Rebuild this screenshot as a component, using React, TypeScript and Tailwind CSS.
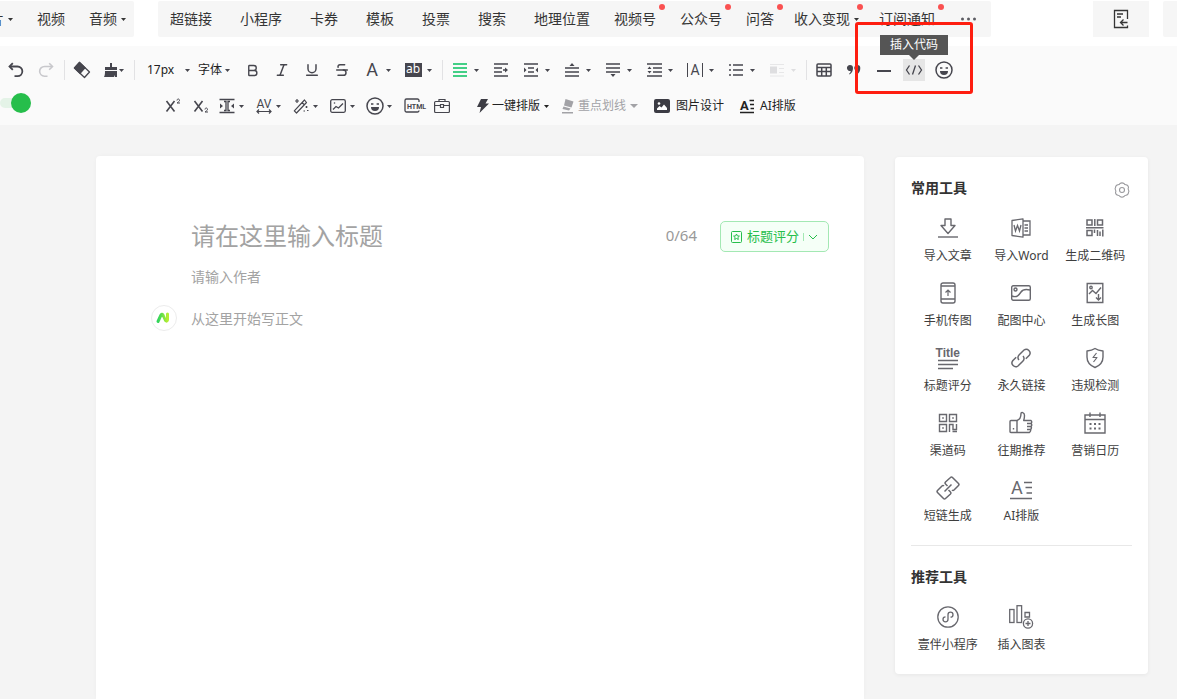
import clsx from "clsx";
import { Bold, Italic, Strikethrough, Underline } from "lucide-react";
import type { ReactNode } from "react";

interface DrawingProps {
  w?: number;
  h?: number;
  sw?: number;
  className?: string;
  children: ReactNode;
}

function Drawing({ w = 16, h = 16, sw = 1.4, className, children }: DrawingProps) {
  return (
    <svg
      width={w}
      height={h}
      viewBox={`0 0 ${w} ${h}`}
      fill="none"
      stroke="currentColor"
      strokeWidth={sw}
      className={clsx("shrink-0 overflow-visible", className)}
      aria-hidden="true"
    >
      {children}
    </svg>
  );
}

function Caret({ className }: { className?: string }) {
  return (
    <svg
      width="5"
      height="3"
      viewBox="0 0 5 3"
      fill="currentColor"
      className={clsx("shrink-0", className)}
      aria-hidden="true"
    >
      <path d="M0 0h5L2.5 3z" />
    </svg>
  );
}

interface ToolProps {
  label: string;
  children: ReactNode;
  disabled?: boolean;
}

function Tool({ label, children, disabled }: ToolProps) {
  return (
    <button
      aria-label={label}
      disabled={disabled}
      className="flex h-9 w-[30px] shrink-0 items-center justify-center disabled:text-[#c8c8cc]"
    >
      {children}
    </button>
  );
}

function DropTool({ label, children, disabled }: ToolProps) {
  return (
    <button
      aria-label={label}
      disabled={disabled}
      className="flex h-9 w-[41px] shrink-0 items-center pl-px disabled:text-[#dedee0]"
    >
      <span className="flex w-7 justify-center">{children}</span>
      <Caret />
    </button>
  );
}

function SmallTool({ label, children }: ToolProps) {
  return (
    <button
      aria-label={label}
      className="flex h-9 w-7 shrink-0 items-center justify-center"
    >
      {children}
    </button>
  );
}

function SmallDropTool({ label, children }: ToolProps) {
  return (
    <button aria-label={label} className="flex h-9 w-[37px] shrink-0 items-center">
      <span className="flex w-6 justify-center">{children}</span>
      <Caret />
    </button>
  );
}

function Divider() {
  return (
    <span className="flex w-1.5 shrink-0 justify-center">
      <span className="h-5 w-px bg-[#e2e2e4]" />
    </span>
  );
}

function SmileIcon() {
  return (
    <Drawing w={18} h={18} sw={1.5}>
      <circle cx="9" cy="9" r="8" />
      <path d="M5 10h8a4 4 0 0 1-8 0z" fill="currentColor" stroke="none" />
      <path d="M5 7h2.4M10.6 7H13" />
    </Drawing>
  );
}

interface MenuItemProps {
  label: string;
  caret?: boolean;
  dot?: boolean;
}

function MenuItem({ label, caret, dot }: MenuItemProps) {
  return (
    <button className="relative flex shrink-0 items-center gap-1 text-sm leading-5 whitespace-nowrap">
      {label}
      {caret && <Caret />}
      {dot && (
        <span
          className={clsx(
            "absolute -top-[5px] size-1.5 rounded-full bg-[#fa5151]",
            caret ? "-right-1" : "-right-[9px]"
          )}
        />
      )}
    </button>
  );
}

function TopBar() {
  return (
    <header className="flex h-[46px] shrink-0 items-start gap-6 overflow-hidden bg-white pt-px">
      <nav className="flex h-9 w-[134px] shrink-0 items-center justify-end gap-6 overflow-hidden rounded-r-xs bg-[#f6f6f6] pr-2">
        <MenuItem label="图片" caret />
        <MenuItem label="视频" />
        <MenuItem label="音频" caret />
      </nav>
      <nav className="flex h-9 shrink-0 items-center rounded-xs bg-[#f6f6f6] px-3">
        <div className="flex gap-7">
          {LINK_MENU.map((label) => (
            <MenuItem key={label} label={label} />
          ))}
        </div>
        <div className="ml-6 flex gap-6">
          {ACCOUNT_MENU.map((label) => (
            <MenuItem key={label} label={label} dot />
          ))}
        </div>
        <div className="ml-5 flex gap-5">
          <MenuItem label="收入变现" caret dot />
          <MenuItem label="订阅通知" dot />
        </div>
        <button aria-label="更多" className="ml-6 text-[#5c5c62]">
          <Drawing w={20} h={6}>
            <g fill="currentColor" stroke="none">
              <circle cx="3.5" cy="3" r="1.5" />
              <circle cx="9.5" cy="3" r="1.5" />
              <circle cx="15.5" cy="3" r="1.5" />
            </g>
          </Drawing>
        </button>
      </nav>
      <div className="ml-auto flex shrink-0 gap-3.5">
        <button
          aria-label="退出"
          className="flex h-9 w-14 items-center justify-center bg-[#f6f6f6]"
        >
          <Drawing w={16} h={20} sw={1.3}>
            <path d="M14.5 10V1.500h-13v17h13v-2" />
            <path d="M4 5h6M4 8h4" />
            <path d="M14.500 13.500H8.500M10.500 10.500l-3 3 3 3" />
          </Drawing>
        </button>
        <div className="h-9 w-3.5 rounded-l-xs bg-[#f6f6f6]" />
      </div>
    </header>
  );
}

function CodeTool() {
  return (
    <div className="relative flex h-9 w-[30px] shrink-0 items-center justify-center">
      <button
        aria-label="插入代码"
        className="flex size-[22px] items-center justify-center bg-[#e6e6e6]"
      >
        <Drawing w={18} h={12} sw={1.3}>
          <path d="M4.5 1.5 1.500 6l3 4.500M13.500 1.500l3 4.500-3 4.500M10.500 1.500l-3 9" />
        </Drawing>
      </button>
      <div
        role="tooltip"
        className="absolute -top-[17px] left-1/2 z-20 flex h-5 w-[68px] -translate-x-1/2 items-center justify-center bg-[#555] text-xs text-white"
      >
        插入代码
        <span className="absolute top-full left-1/2 -translate-x-1/2 border-x-[5px] border-t-[5px] border-x-transparent border-t-[#555]" />
      </div>
      <div className="pointer-events-none absolute -top-[30px] left-1/2 z-10 h-[72px] w-[118px] -translate-x-1/2 rounded-[3px] border-3 border-[#fe1e10]" />
    </div>
  );
}

function FormatRow() {
  return (
    <div className="flex items-center pl-px">
      <Tool label="撤销">
        <Drawing sw={1.8}>
          <path d="M2 4.500h7.500a4.800 4.800 0 0 1 0 9.700H6.500" />
          <path d="M4.800 1.200 1.500 4.500l3.300 3.300" />
        </Drawing>
      </Tool>
      <Tool label="重做" disabled>
        <Drawing sw={1.6}>
          <path d="M14 4.500H6.500a4.800 4.800 0 0 0 0 9.700h3" />
          <path d="M11.200 1.200l3.300 3.300-3.300 3.300" />
        </Drawing>
      </Tool>
      <Divider />
      <Tool label="清除格式">
        <Drawing w={18} h={18} sw={1.3}>
          <path d="M6.500 1.500l10 9.500-5 5.500-10-9.500z" strokeLinejoin="round" />
          <path d="M6.500 1.500l5.500 5.200-5 5.500-5.500-5.200z" fill="currentColor" />
        </Drawing>
      </Tool>
      <button
        aria-label="格式刷"
        className="flex h-9 w-[34px] shrink-0 items-center justify-center gap-px"
      >
        <Drawing w={14} h={14}>
          <path
            d="M6 0h2v4h5v3H1V4h5zM1 8h12v6h-2v-2l-1 2H0c1-2 1-4 1-6z"
            fill="currentColor"
            stroke="none"
          />
        </Drawing>
        <Caret />
      </button>
      <Divider />
      <label className="flex w-[61px] shrink-0 items-center pl-2.5">
        <select
          aria-label="字号"
          className="w-[38px] appearance-none bg-transparent text-xs text-[#222] outline-none"
        >
          <option>17px</option>
        </select>
        <Caret />
      </label>
      <label className="flex w-[39px] shrink-0 items-center">
        <select
          aria-label="字体"
          className="w-[27px] appearance-none bg-transparent text-xs text-[#222] outline-none"
        >
          <option>字体</option>
        </select>
        <Caret />
      </label>
      <Tool label="加粗">
        <Bold size={15} strokeWidth={2.2} />
      </Tool>
      <Tool label="斜体">
        <Italic size={16} strokeWidth={2.2} />
      </Tool>
      <Tool label="下划线">
        <Underline size={16} strokeWidth={2.2} />
      </Tool>
      <Tool label="删除线">
        <Strikethrough size={16} strokeWidth={2.2} />
      </Tool>
      <DropTool label="字体颜色">
        <span className="font-['Roboto',sans-serif] text-lg leading-5">A</span>
      </DropTool>
      <DropTool label="背景色">
        <span className="h-3.5 w-[17px] bg-[#46464e] text-center text-xs leading-3 text-white">
          ab
        </span>
      </DropTool>
      <Divider />
      <DropTool label="对齐">
        <Drawing w={14} h={14} sw={1.5} className="text-[#07c160]">
          <path d="M0 1h14M0 5h14M0 9h14M0 13h14" />
        </Drawing>
      </DropTool>
      <Tool label="首行缩进">
        <Drawing w={16} h={14} sw={1.5}>
          <path d="M1 1h14M1 5h8M1 9h8M1 13h14M10 7h3" />
          <path d="M12 4.500 15 7l-3 2.500z" fill="currentColor" stroke="none" />
        </Drawing>
      </Tool>
      <DropTool label="两端缩进">
        <Drawing w={16} h={14} sw={1.5}>
          <path d="M1 1h14M5 5h6M5 9h6M1 13h14" />
          <path
            d="M1 4.500 3.500 7 1 9.500zM15 4.500 12.500 7 15 9.500z"
            fill="currentColor"
            stroke="none"
          />
        </Drawing>
      </DropTool>
      <DropTool label="段前距">
        <Drawing w={14} h={14} sw={1.5}>
          <path d="M0 5h14M0 9h14M0 13h14" />
          <path d="M4.500 3 7 0l2.500 3z" fill="currentColor" stroke="none" />
        </Drawing>
      </DropTool>
      <DropTool label="段后距">
        <Drawing w={14} h={14} sw={1.5}>
          <path d="M0 1h14M0 5h14M0 9h14" />
          <path d="M4.500 11 7 14l2.500-3z" fill="currentColor" stroke="none" />
        </Drawing>
      </DropTool>
      <DropTool label="行间距">
        <Drawing w={15} h={14} sw={1.5}>
          <path d="M0 1h15M6 5h9M6 9h9M0 13h15" />
          <path
            d="M.5 6 2.500 3.500 4.500 6zM.5 8l2 2.500L4.500 8z"
            fill="currentColor"
            stroke="none"
          />
        </Drawing>
      </DropTool>
      <DropTool label="字间距">
        <span className="flex h-3.5 items-center border-x border-current px-0.5 font-['Roboto',sans-serif] text-sm leading-3.5">
          A
        </span>
      </DropTool>
      <DropTool label="列表">
        <Drawing w={14} h={14} sw={1.5}>
          <path d="M4 2h10M4 7h10M4 12h10M0 2h2M0 7h2M0 12h2" />
        </Drawing>
      </DropTool>
      <DropTool label="浮动" disabled>
        <Drawing w={14} h={14} sw={1}>
          <path d="M0 1.500h14M9 5.500h5M9 9.500h5M0 13h14" opacity=".7" />
          <path d="M0 3.500h7v7H0z" fill="currentColor" stroke="none" />
        </Drawing>
      </DropTool>
      <Divider />
      <Tool label="表格">
        <Drawing w={16} h={14} sw={1.5}>
          <rect x="1" y="1" width="14" height="12" rx="1" />
          <path d="M1 4.500h14M1 8.500h14M5.700 4.500V13M10.300 4.500V13" />
        </Drawing>
      </Tool>
      <Tool label="引用">
        <Drawing w={14} h={12}>
          <path
            d="M3 1a3 3 0 0 1 3 3c0 3-1 5-3.500 6.500L2 9.800C3.200 9 3.700 8 3.700 6.900A3 3 0 1 1 3 1zM10.300 1a3 3 0 0 1 3 3c0 3-1 5-3.500 6.500l-.5-.7c1.200-.8 1.700-1.800 1.700-2.900A3 3 0 1 1 10.300 1z"
            fill="currentColor"
            stroke="none"
          />
        </Drawing>
      </Tool>
      <Tool label="分隔线">
        <Drawing w={14} h={4} sw={2}>
          <path d="M0 3h14" />
        </Drawing>
      </Tool>
      <CodeTool />
      <Tool label="表情">
        <SmileIcon />
      </Tool>
    </div>
  );
}

function PluginRow() {
  return (
    <div className="flex items-center">
      <input
        type="checkbox"
        defaultChecked
        aria-label="插件开关"
        className="relative mr-32 mb-1.5 h-2.5 w-[31px] shrink-0 appearance-none rounded-full bg-[#e4f3e7] after:absolute after:-top-[5px] after:right-0 after:size-5 after:rounded-full after:bg-[#26be4b] after:content-['']"
      />
      <SmallTool label="上标">
        <Drawing sw={1.6}>
          <path d="M1.500 3l8 10.500M9.500 3l-8 10.500" />
          <path d="M12 2.500c0-2 2.500-2 2.500 0 0 1-1.500 1.500-2.500 2.500h3" strokeWidth="1" />
        </Drawing>
      </SmallTool>
      <SmallTool label="下标">
        <Drawing sw={1.6}>
          <path d="M1.500 3l8 10.500M9.500 3l-8 10.500" />
          <path d="M12 11.500c0-2 2.500-2 2.500 0 0 1-1.500 1.500-2.500 2.500h3" strokeWidth="1" />
        </Drawing>
      </SmallTool>
      <SmallDropTool label="页边距">
        <Drawing sw={1.3}>
          <path d="M.5 1.500h15M.5 14.500h15M5 3.500h2v9H5M11 3.500H9v9h2" />
          <path
            d="M1 5.500 4 8l-3 2.500zM15 5.500 12 8l3 2.500z"
            fill="currentColor"
            stroke="none"
          />
        </Drawing>
      </SmallDropTool>
      <SmallDropTool label="字符间距">
        <span className="flex flex-col items-center">
          <span className="font-['Roboto',sans-serif] text-xs leading-[10px]">AV</span>
          <Drawing w={16} h={5} sw={1.2}>
            <path d="M1 2.500h14M3 .5 1 2.500l2 2M13 .5l2 2-2 2" />
          </Drawing>
        </span>
      </SmallDropTool>
      <SmallDropTool label="魔法棒">
        <Drawing sw={1.2}>
          <path d="M11.500 2 13.500 4.500 3.500 15 1.300 12.800zM9 4.500 11.500 7" strokeLinejoin="round" />
          <path d="M4 1v4M2 3h4M13.500 8v2M12.500 9h2M10.500 13h1.500M14 12.500h1.500" />
        </Drawing>
      </SmallDropTool>
      <SmallDropTool label="图片工具">
        <Drawing h={14} sw={1.3}>
          <rect x=".7" y=".7" width="14.600" height="12.600" rx="1.5" />
          <path d="M3 10.500l3-3 2.500 1.500L13 4.500" />
          <circle cx="4.5" cy="4" r=".8" fill="currentColor" stroke="none" />
        </Drawing>
      </SmallDropTool>
      <SmallDropTool label="表情包">
        <SmileIcon />
      </SmallDropTool>
      <SmallTool label="HTML">
        <Drawing w={22} h={16} sw={1.3}>
          <path d="M16 4V2.500A1.500 1.500 0 0 0 14.500 1h-11A1.500 1.500 0 0 0 2 2.500v10A1.500 1.500 0 0 0 3.500 14h11a1.500 1.500 0 0 0 1.500-1.500" />
          <text
            x="4"
            y="10.5"
            fontSize="7"
            fontWeight="700"
            fill="currentColor"
            stroke="none"
            className="font-['Roboto',sans-serif]"
          >
            HTML
          </text>
        </Drawing>
      </SmallTool>
      <SmallTool label="工具箱">
        <Drawing sw={1.2}>
          <rect x=".6" y="3.5" width="14.800" height="11" rx="1" />
          <path d="M5 3.500V1.500h6v2M.7 7.500H6M10 7.500h5.300M6.500 6.500h3v3h-3z" />
        </Drawing>
      </SmallTool>
      <button className="ml-5 flex h-9 shrink-0 items-center text-xs text-[#222]">
        <Drawing w={14} h={14} className="text-[#3c3c44]">
          <path d="M5 0h7L9.500 4.500H13L3.500 14l1.500-6H1z" fill="currentColor" stroke="none" />
        </Drawing>
        <span className="mr-1 ml-0.5 whitespace-nowrap">一键排版</span>
        <Caret />
      </button>
      <button className="ml-3 flex h-9 shrink-0 items-center text-xs text-[#a2a2a6]">
        <Drawing w={14} h={14}>
          <path
            d="M4.500 0 12.500 2.500 10.500 8.500 3 6.500zM2.500 7.500 9.500 9.500 8 11.500 1.500 10zM1 13h11v1.500H1z"
            fill="currentColor"
            stroke="none"
          />
        </Drawing>
        <span className="mr-1 ml-[3px] whitespace-nowrap">重点划线</span>
        <Drawing w={8} h={4}>
          <path d="M0 0h8L4 4z" fill="currentColor" stroke="none" />
        </Drawing>
      </button>
      <button className="ml-4 flex h-9 shrink-0 items-center gap-1.5 text-xs text-[#222]">
        <Drawing w={16} h={14}>
          <rect width="16" height="14" rx="2" fill="#3c3c44" stroke="none" />
          <circle cx="5" cy="4.5" r="1.3" fill="#fff" stroke="none" />
          <path d="M3 11V9.500L5.500 7l2 1.500L10 5.500 13 9v2z" fill="#fff" stroke="none" />
        </Drawing>
        <span className="whitespace-nowrap">图片设计</span>
      </button>
      <button className="ml-4 flex h-9 shrink-0 items-center gap-1.5 text-xs text-[#222]">
        <Drawing w={14} h={14} sw={1.3}>
          <path d="M0 13.500h14M9.500 1.500H14M10 5.500h4M10.500 9.500H14" />
          <text
            x="0"
            y="10.5"
            fontSize="13"
            fontWeight="700"
            fill="currentColor"
            stroke="none"
            className="font-['Roboto',sans-serif]"
          >
            A
          </text>
        </Drawing>
        <span className="whitespace-nowrap">AI排版</span>
      </button>
    </div>
  );
}

function Editor() {
  return (
    <section className="flex min-w-0 flex-1 flex-col rounded-t-sm bg-white pt-[65px] pr-[35px] shadow-[0_0_4px_rgba(0,0,0,0.03)]">
      <div className="flex h-[31px] items-start pl-[95px]">
        <input
          aria-label="标题"
          placeholder="请在这里输入标题"
          className="h-[30px] min-w-0 flex-1 text-2xl leading-[30px] outline-none placeholder:text-[#a3a3a3]"
        />
        <span className="mt-1 mr-[23px] text-[15px] leading-5 text-[#999]">0/64</span>
        <button className="flex h-[31px] w-[109px] shrink-0 items-center justify-center rounded-[5px] border border-[#a3e8b3] bg-[#f5fff7] text-[13px] text-[#26be4b]">
          <Drawing w={12} h={12} sw={1}>
            <rect x=".5" y=".5" width="10" height="11" rx="1" />
            <path d="M5.500 3l.9 1.900 2 .2-1.500 1.400.4 2-1.800-1-1.800 1 .4-2L2.600 5.100l2-.2z" />
          </Drawing>
          <span className="ml-1">标题评分</span>
          <span className="mx-1 h-2 w-px bg-[#a3e8b3]" />
          <Drawing w={10} h={6} sw={1}>
            <path d="M1 1l4 4 4-4" />
          </Drawing>
        </button>
      </div>
      <input
        aria-label="作者"
        placeholder="请输入作者"
        className="mt-[15px] ml-[95px] h-5 text-sm leading-5 outline-none placeholder:text-[#a3a3a3]"
      />
      <div className="mt-[18px] flex flex-1 gap-3.5 pl-[55px]">
        <button
          aria-label="AI 助手"
          className="flex size-[26px] shrink-0 items-center justify-center rounded-full border border-[#ececec]"
        >
          <Drawing w={14} h={12} className="mr-0.5">
            <defs>
              <linearGradient id="assistant" x1="0" y1="0" x2="1" y2="0">
                <stop offset="0" stopColor="#2fd45c" />
                <stop offset="1" stopColor="#b4ee32" />
              </linearGradient>
            </defs>
            <path
              d="M2 9.500 5 3q1-1.500 2 0l2.500 5.500q1.500 1.500 2-.5V2"
              stroke="url(#assistant)"
              strokeWidth="3"
              strokeLinecap="round"
              strokeLinejoin="round"
            />
          </Drawing>
        </button>
        <textarea
          aria-label="正文"
          placeholder="从这里开始写正文"
          className="mt-1 min-w-0 flex-1 resize-none text-sm leading-5 outline-none placeholder:text-[#a3a3a3]"
        />
      </div>
    </section>
  );
}

interface SideTool {
  label: string;
  icon: ReactNode;
}

function ToolGrid({ tools }: { tools: SideTool[] }) {
  return (
    <div className="mt-[18px] grid grid-cols-3 gap-y-[17px]">
      {tools.map(({ label, icon }) => (
        <button key={label} className="flex flex-col items-center gap-2">
          <span className="flex h-6 items-center text-[#68686e]">{icon}</span>
          <span className="text-xs leading-4 whitespace-nowrap">{label}</span>
        </button>
      ))}
    </div>
  );
}

function Sidebar() {
  return (
    <aside className="mt-px w-[253px] shrink-0 self-start rounded-sm bg-white px-4 py-[21px] text-[#3e3e3e] shadow-[0_1px_4px_rgba(0,0,0,0.06)]">
      <div className="flex h-5 items-center justify-between">
        <h2 className="text-sm leading-5 font-bold text-[#333]">常用工具</h2>
        <button aria-label="设置" className="mt-1 mr-0.5 text-[#9a9a9e]">
          <Drawing sw={1.1}>
            <path
              d="M6 1.500Q8 .2 10 1.500q.6 1.200 2 1.300 2.300.2 2.500 2.700-.8 1.200 0 2.500.8 1.300 0 2.500-.2 2.500-2.500 2.700-1.400.1-2 1.300-2 1.300-4 0-.6-1.200-2-1.300-2.300-.2-2.500-2.700.8-1.200 0-2.500-.8-1.300 0-2.500.2-2.500 2.500-2.700 1.400-.1 2-1.300z"
              strokeLinejoin="round"
            />
            <circle cx="8" cy="8" r="2.5" />
          </Drawing>
        </button>
      </div>
      <ToolGrid tools={COMMON_TOOLS} />
      <h2 className="mt-[21px] border-t border-[#e8e8e8] pt-[21px] text-sm leading-5 font-bold text-[#333]">
        推荐工具
      </h2>
      <ToolGrid tools={RECOMMENDED_TOOLS} />
    </aside>
  );
}

export default function App() {
  return (
    <div className="flex min-h-screen flex-col overflow-x-hidden bg-[#f4f4f4] font-['Noto_Sans','Noto_Sans_CJK_SC',sans-serif] text-[#353535]">
      <TopBar />
      <div className="bg-[#fafafa] pt-1.5 pb-px text-[#46464e]">
        <FormatRow />
        <PluginRow />
      </div>
      <main className="flex flex-1 gap-[31px] pt-[31px] pr-[29px] pl-24">
        <Editor />
        <Sidebar />
      </main>
    </div>
  );
}

const LINK_MENU = ["超链接", "小程序", "卡券", "模板", "投票", "搜索", "地理位置"];
const ACCOUNT_MENU = ["视频号", "公众号", "问答"];

const COMMON_TOOLS: SideTool[] = [
  {
    label: "导入文章",
    icon: (
      <Drawing w={20} h={20}>
        <path d="M7 1h6v6.500h4L10 15.500 3 7.500h4z" strokeLinejoin="round" />
        <path d="M0 19h20" />
      </Drawing>
    ),
  },
  {
    label: "导入Word",
    icon: (
      <Drawing w={20} h={20} sw={1.3}>
        <path d="M1 2.500 12 .8v18.400L1 17.500z" strokeLinejoin="round" />
        <path d="M12 3h7v14h-7M13.500 7H17M13.500 10H17M13.500 13H17" />
        <path d="M3 7l1.500 6L6.500 7.500 8.500 13 10 7" />
      </Drawing>
    ),
  },
  {
    label: "生成二维码",
    icon: (
      <Drawing w={20} h={20} sw={1.5}>
        <path d="M2 2h5v5H2zM12.500 2h5v5h-5zM2 12.500h5v5H2zM9.800 1v7M1 9.800h17.500M9.500 11.500v3.500M12.500 12v6M15 13.500V18M17.800 11.500V18.500" />
      </Drawing>
    ),
  },
  {
    label: "手机传图",
    icon: (
      <Drawing w={18} h={22}>
        <rect x="2" y="1" width="14" height="20" rx="2" />
        <path d="M2 4h14M2 17h14" />
        <path d="M9 14V8M6.500 10.500 9 8l2.500 2.500" strokeWidth="1.2" />
      </Drawing>
    ),
  },
  {
    label: "配图中心",
    icon: (
      <Drawing w={20} h={16}>
        <rect x=".7" y=".7" width="18.600" height="14.600" rx="1.5" />
        <circle cx="4.5" cy="4.5" r="1.5" />
        <path d="M1 11c5 2 7-1 9-4s5-3 9-2" />
      </Drawing>
    ),
  },
  {
    label: "生成长图",
    icon: (
      <Drawing w={18} h={22}>
        <path d="M1.200 1.500h15.600v19H1.200z" />
        <circle cx="5" cy="5.5" r="1.2" />
        <path d="M3 12l3.500-3.500 3.500 3L15 5.500M12.500 12v6M10 15.500l2.500 2.500 2.500-2.500" />
      </Drawing>
    ),
  },
  {
    label: "标题评分",
    icon: (
      <span className="flex flex-col items-center">
        <span className="font-['Liberation_Sans',sans-serif] text-xs leading-3 font-bold">
          Title
        </span>
        <Drawing w={20} h={10} sw={1.3}>
          <path d="M0 1.500h20M0 5.500h20M0 9.500h15" />
        </Drawing>
      </span>
    ),
  },
  {
    label: "永久链接",
    icon: (
      <Drawing w={22} h={22} sw={1.5}>
        <path d="M9 13a3.500 3.500 0 0 1 0-5l5-5a3.800 3.800 0 0 1 5.300 5.300l-3.500 3.500M13 9a3.500 3.500 0 0 1 0 5l-5 5a3.800 3.800 0 0 1-5.300-5.300l3.500-3.500" />
      </Drawing>
    ),
  },
  {
    label: "违规检测",
    icon: (
      <Drawing w={20} h={22}>
        <path
          d="M10 1.500c2.500 1.800 5 2.300 8 2.500v6c0 5-3 8.500-8 10.500C5 18.500 2 15 2 10V4c3-.2 5.500-.7 8-2.500z"
          strokeLinejoin="round"
        />
        <path d="M11.500 6 8 10.500h4L8.500 15" strokeLinejoin="round" strokeWidth="1.2" />
      </Drawing>
    ),
  },
  {
    label: "渠道码",
    icon: (
      <Drawing w={20} h={20}>
        <path d="M1.500 1.500h7v7h-7zM11.500 1.500h7v7h-7zM1.500 11.500h7v7h-7zM11.500 19v-7.500h3.500v5h3.500V11M14.500 18.500H19" />
        <path
          d="M4.200 4.200h1.600v1.600H4.200zM14.200 4.200h1.600v1.600h-1.600zM4.200 14.200h1.600v1.600H4.200z"
          fill="currentColor"
          stroke="none"
        />
      </Drawing>
    ),
  },
  {
    label: "往期推荐",
    icon: (
      <Drawing w={24} h={24}>
        <path
          d="M8 9.500c3-1 4-3.500 4-7 0-1.500 3.500-1.500 3.500 2 0 2-.3 3.500-.8 5H22q1.500 1.300 0 3 1.500 1.500 0 3 1 1.500-.3 3 .3 1.800-1.200 3H2q-1 0-1-1v-10q0-1 1-1z"
          strokeLinejoin="round"
        />
        <path d="M8 9.500v12M18 12.500h4M18 15.500h4M18 18.500h3.500M4.500 17v1.500" />
      </Drawing>
    ),
  },
  {
    label: "营销日历",
    icon: (
      <Drawing w={22} h={22}>
        <path d="M1 3h20v18H1zM1 7.500h20M6 .5V5M16 .5V5" />
        <path
          d="M5.500 12h2M10 12h2M14.500 12h2M5.500 16.500h2M10 16.500h2M14.500 16.500h2"
          strokeWidth="2"
        />
      </Drawing>
    ),
  },
  {
    label: "短链生成",
    icon: (
      <Drawing w={24} h={24} sw={1.5}>
        <path
          d="M11.500 10 9.500 8q-1-1 0-2L14.500 1.500q1-1 2 0l6 6q1 1 0 2L18 14q-1 1-2 0M12.500 14l2 2q1 1 0 2L9.500 22.500q-1 1-2 0l-6-6q-1-1 0-2L6 10q1-1 2 0M8.500 15.500l7-7"
          strokeLinejoin="round"
        />
      </Drawing>
    ),
  },
  {
    label: "AI排版",
    icon: (
      <Drawing w={22} h={20} className="mt-1">
        <path d="M0 18.500h22M14 2.500h8M15.500 7.500H22M16.500 13H22" />
        <text
          x="1"
          y="14"
          fontSize="18"
          fill="currentColor"
          stroke="none"
          className="font-['Roboto',sans-serif]"
        >
          A
        </text>
      </Drawing>
    ),
  },
];

const RECOMMENDED_TOOLS: SideTool[] = [
  {
    label: "壹伴小程序",
    icon: (
      <Drawing w={22} h={22} sw={1.3}>
        <circle cx="11" cy="11" r="10.2" />
        <path d="M8.500 10.800a2.500 2.500 0 1 0 2.500 2.500V8.700a2.500 2.500 0 1 1 2.500 2.500" />
      </Drawing>
    ),
  },
  {
    label: "插入图表",
    icon: (
      <Drawing w={24} h={24} sw={1.3}>
        <rect x=".7" y="4.5" width="4.300" height="13" />
        <rect x="8" y=".7" width="4.600" height="16.800" />
        <path d="M16 7.500h4.500v4.500H16z" />
        <circle cx="19" cy="18.5" r="4.6" />
        <path d="M19 16v5M16.500 18.500h5" />
      </Drawing>
    ),
  },
];
